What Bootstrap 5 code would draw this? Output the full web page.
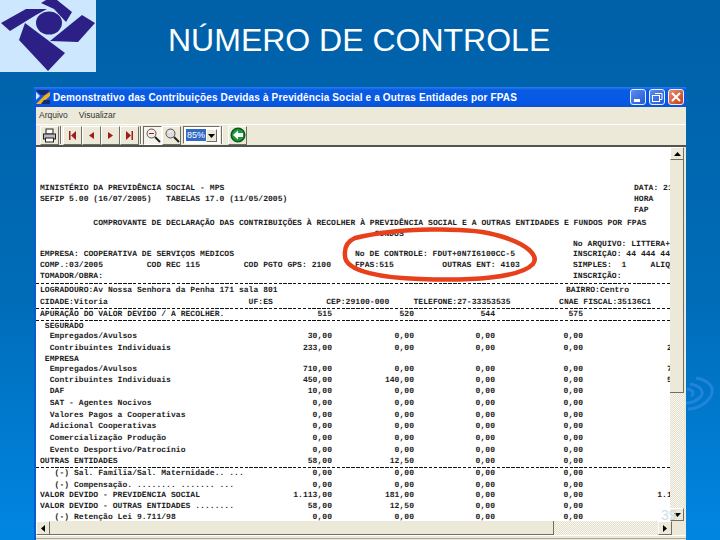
<!DOCTYPE html>
<html lang="pt-br">
<head>
  <meta charset="UTF-8" />
  <meta name="viewport" content="width=device-width, initial-scale=1.0"/>
  <title>Número de Controle</title>
  <link href="https://cdn.jsdelivr.net/npm/bootstrap@5.3.0/dist/css/bootstrap.min.css" rel="stylesheet"/>
  <style>
    :root {
      --xp-bege: #ece9d8;
      --xp-escuro: #716f64;
    }
    body {
      margin: 0;
      background-color: #0060a8;
    }
    .slide {
      position: relative;
      width: 720px;
      height: 540px;
      overflow: hidden;
      background: linear-gradient(180deg, #0060a8 0%, #006cb8 55%, #0086e2 100%);
    }
    .topo { height: 87px; flex: none; }
    .logo { flex: none; display: block; }
    .titulo {
      margin-left: 72px;
      font: 400 32px "Liberation Sans", Arial, sans-serif;
      color: #fff;
      line-height: 1;
      white-space: nowrap;
    }
    .ondas { position: absolute; left: 660px; top: 360px; }
    .janela {
      position: relative;
      width: 652px;
      margin-left: 34px;
      background: var(--xp-bege);
      border-left: 2px solid #0a5ad0;
      min-height: 0;
    }

    /* barra de titulo */
    .barra-titulo {
      height: 20px;
      margin-left: -2px;
      padding: 0 2px 0 2px;
      background: linear-gradient(180deg, #2b7cf2 0%, #0a5ce2 15%, #0558e6 70%, #0a54d4 100%);
      flex: none;
    }
    .barra-titulo .texto {
      font: 700 10px "Liberation Sans", Arial, sans-serif;
      letter-spacing: .15px;
      color: #fff;
      margin-left: 3px;
      white-space: nowrap;
    }
    .bt-janela {
      width: 16px;
      height: 16px;
      margin-left: 3px;
      border: 1px solid #e8f0ff;
      border-radius: 3px;
      background: linear-gradient(135deg, #5a8cf0, #2458d8);
      display: block;
      flex: none;
    }
    .bt-janela svg { display: block; }
    .bt-janela.fechar { background: linear-gradient(135deg, #e8906a, #c83c18); }

    /* menu e ferramentas */
    .menu-app { height: 18px; flex: none; border-bottom: 1px solid #fff; }
    .menu-app .nav-link {
      padding: 0 0 0 3px;
      margin-right: 8px;
      font: 400 8.5px/17px "Liberation Sans", Arial, sans-serif;
      color: #333;
    }
    .ferramentas {
      height: 22px;
      flex: none;
      padding-left: 4px;
      border-bottom: 2px solid #55544c;
    }
    .bt-xp {
      width: 19px;
      height: 19px;
      padding: 0;
      border: 1px solid;
      border-color: #fff var(--xp-escuro) var(--xp-escuro) #fff;
      border-radius: 0;
      background: var(--xp-bege);
      display: flex;
      align-items: center;
      justify-content: center;
      flex: none;
    }
    .bt-xp.premido {
      border-color: var(--xp-escuro) #fff #fff var(--xp-escuro);
      background: #f6f4ea;
    }
    .separa {
      width: 2px;
      height: 18px;
      margin: 0 1px;
      border-left: 1px solid var(--xp-escuro);
      border-right: 1px solid #fff;
      flex: none;
    }
    .combo {
      width: 37px;
      height: 18px;
      margin-left: 2px;
      padding: 2px;
      background: #fff;
      border: 1px solid;
      border-color: var(--xp-escuro) #fff #fff var(--xp-escuro);
      flex: none;
    }
    .combo .valor {
      background: #316ac5;
      color: #fff;
      font: 400 9px/12px "Liberation Sans", Arial, sans-serif;
      padding: 0 1px;
      white-space: nowrap;
    }
    .combo .seta {
      width: 12px;
      height: 13px;
      margin-left: auto;
      background: var(--xp-bege);
      border: 1px solid;
      border-color: #fff var(--xp-escuro) var(--xp-escuro) #fff;
    }

    /* documento */
    .corpo { height: 374px; flex: none; }
    .folha {
      width: 634px;
      flex: none;
      overflow: hidden;
      background: #fff;
      padding-top: 36px;
      font: 700 8px "Liberation Mono", "Courier New", monospace;
      letter-spacing: .05px;
      text-rendering: geometricPrecision;
      color: #1c1c1c;
    }
    .linha {
      white-space: pre;
      padding-left: 4px;
      width: 680px;
      overflow: hidden;
    }
    .lin-cab { display: grid; grid-template-columns: 315px 218px 1fr; }
    .lin-dir { display: grid; grid-template-columns: 594px 1fr; }
    .lin-bairro { display: grid; grid-template-columns: 526px 1fr; }
    .lin-valor { display: grid; grid-template-columns: 220px 72px 82px 81px 88px 113px; }
    .lin-valor > span:not(:first-child) { text-align: right; }
    .alt-10 { height: 10px; line-height: 10px; }
    .alt-11 { height: 11px; line-height: 11px; }
    .alt-12 { height: 12px; line-height: 12px; }
    .alt-13 { height: 13px; line-height: 13px; }
    .corte {
      height: 1px;
      background: repeating-linear-gradient(90deg, #111 0 3.4px, transparent 3.4px 4.85px);
    }

    /* barras de rolagem */
    .rola-v { width: 14px; flex: none; }
    .rola-seta {
      border: 1px solid;
      border-color: #fff var(--xp-escuro) var(--xp-escuro) #fff;
      background: var(--xp-bege);
      flex: none;
    }
    .rola-v .rola-seta { height: 13px; }
    .rola-v .polegar { height: 233px; }
    .hachura {
      flex: 1 1 0;
      background: repeating-conic-gradient(#faf8f0 0 25%, #e2dfcd 0 50%) 0 0 / 2px 2px;
    }
    .rola-h { height: 14px; flex: none; }
    .rola-h .rola-seta { width: 14px; }
    .rola-h .polegar { width: 504px; }
    .polegar {
      flex: none;
      background: var(--xp-bege);
      border-right: 1px solid var(--xp-escuro);
      border-bottom: 1px solid var(--xp-escuro);
    }
    .canto { width: 14px; flex: none; }
    .rodape-app { height: 5px; border-top: 1px solid #fff; flex: none; }
    .rodape-app::after {
      content: "";
      display: block;
      height: 1px;
      margin-top: 2px;
      background: #aca899;
    }

    /* sobreposicoes */
    .elipse { position: absolute; left: 338px; top: 224px; }
    .num-slide {
      position: absolute;
      left: 661px;
      top: 508px;
      font: 400 14px/14px "Liberation Sans", Arial, sans-serif;
      color: rgba(190, 215, 235, .85);
    }
  </style>
</head>
<body>
  <div class="slide d-flex flex-column">
    <svg class="ondas" width="60" height="60" viewBox="0 0 60 60" fill="none" stroke="#1f84da" stroke-width="3">
      <path d="M36 18 C52 21 58 31 46 42 C40 47 34 49 28 49"/>
      <path d="M30 24 C42 26 46 33 38 39 C34 42 30 43 26 43"/>
      <path d="M27 29 C33 30 35 33 31 36"/>
    </svg>

    <!-- Cabecalho -->
    <div class="topo d-flex align-items-start">
      <svg class="logo" width="96" height="72" viewBox="0 0 96 72">
        <rect width="96" height="72" fill="#cde8fe"/>
        <g fill="#2c1f85">
          <ellipse cx="49" cy="23" rx="13" ry="11.5"/>
          <polygon points="41,3 46,0 57,0 72,12 66,22 54,9"/>
          <polygon points="1,23 26,9 47,9 36,15 10,31"/>
          <polygon points="50,41 82,15 95,23 78,42"/>
          <polygon points="19,40 25,23 65,53 48,71"/>
        </g>
      </svg>
      <h1 class="titulo mt-4">NÚMERO DE CONTROLE</h1>
    </div>

    <!-- Janela do demonstrativo -->
    <div class="janela d-flex flex-column flex-grow-1">
      <div class="barra-titulo d-flex align-items-center">
        <svg width="14" height="14" viewBox="0 0 14 14">
          <polygon points="0,0 14,0 9,5 5,5" fill="#1a2a70"/>
          <polygon points="9,5 14,2 14,6 5,14 0,14" fill="#f0b020"/>
          <polygon points="0,2 4,6 0,10" fill="#d8e4f8"/>
          <polygon points="8,10 14,10 14,14 5,14" fill="#1a2a70"/>
        </svg>
        <span class="texto flex-grow-1">Demonstrativo das Contribuições Devidas à Previdência Social e a Outras Entidades por FPAS</span>
        <span class="bt-janela">
          <svg width="14" height="14" viewBox="0 0 14 14"><rect x="3" y="9" width="6" height="3" fill="#fff"/></svg>
        </span>
        <span class="bt-janela">
          <svg width="14" height="14" viewBox="0 0 14 14" fill="none" stroke="#fff"><rect x="2.5" y="5.5" width="7" height="6"/><path d="M5 3.5h7v6h-2"/></svg>
        </span>
        <span class="bt-janela fechar">
          <svg width="14" height="14" viewBox="0 0 14 14" stroke="#fff" stroke-width="2"><path d="M3 3l8 8M11 3l-8 8"/></svg>
        </span>
      </div>

      <ul class="menu-app nav">
        <li class="nav-item"><a class="nav-link" href="#">Arquivo</a></li>
        <li class="nav-item"><a class="nav-link" href="#">Visualizar</a></li>
      </ul>

      <div class="ferramentas d-flex align-items-center">
        <button class="bt-xp" type="button">
          <svg width="15" height="15" viewBox="0 0 15 15">
            <rect x="4" y="1" width="7" height="5" fill="#fff" stroke="#222"/>
            <rect x="1.500" y="6" width="12" height="5" fill="#bbb" stroke="#222"/>
            <rect x="3.500" y="10" width="8" height="4" fill="#fff" stroke="#222"/>
          </svg>
        </button>
        <span class="separa"></span>
        <button class="bt-xp" type="button">
          <svg width="11" height="11" viewBox="0 0 11 11" fill="#a01c1c"><rect x="2" y="1" width="1.500" height="9"/><polygon points="9,1 9,10 4,5.500"/></svg>
        </button>
        <button class="bt-xp" type="button">
          <svg width="11" height="11" viewBox="0 0 11 11" fill="#a01c1c"><polygon points="8,2 8,9 3,5.500"/></svg>
        </button>
        <button class="bt-xp" type="button">
          <svg width="11" height="11" viewBox="0 0 11 11" fill="#a01c1c"><polygon points="3,2 3,9 8,5.500"/></svg>
        </button>
        <button class="bt-xp" type="button">
          <svg width="11" height="11" viewBox="0 0 11 11" fill="#a01c1c"><polygon points="2,1 2,10 7,5.500"/><rect x="7.500" y="1" width="1.500" height="9"/></svg>
        </button>
        <span class="separa"></span>
        <button class="bt-xp premido" type="button">
          <svg width="16" height="16" viewBox="0 0 16 16" fill="none"><circle cx="6.500" cy="6.500" r="4.500" stroke="#555" fill="#eee"/><path d="M4 6.500h5" stroke="#a01c1c"/><path d="M10 10l5 5" stroke="#222" stroke-width="2"/></svg>
        </button>
        <button class="bt-xp" type="button">
          <svg width="16" height="16" viewBox="0 0 16 16" fill="none"><circle cx="6.500" cy="6.500" r="4.500" stroke="#555" fill="#ddd"/><path d="M4.500 5.500a2.500 2.500 0 0 1 3-1" stroke="#fff"/><path d="M10 10l5 5" stroke="#222" stroke-width="2"/></svg>
        </button>
        <div class="combo d-flex align-items-start">
          <div class="valor">85%</div>
          <div class="seta d-flex align-items-center justify-content-center">
            <svg width="7" height="4" viewBox="0 0 7 4"><polygon points="0,0 7,0 3.500,4" fill="#000"/></svg>
          </div>
        </div>
        <span class="separa"></span>
        <button class="bt-xp ms-1" type="button">
          <svg width="16" height="16" viewBox="0 0 16 16"><circle cx="8" cy="8" r="6.800" fill="#1f9a3c" stroke="#0a5a1a" stroke-width="1.500"/><polygon points="3,8 8,3.500 8,6 13,6 13,10 8,10 8,12.500" fill="#fff"/></svg>
        </button>
      </div>

      <div class="corpo d-flex">
        <div class="folha">
          <div class="linha lin-dir alt-11"><span>MINISTÉRIO DA PREVIDÊNCIA SOCIAL - MPS</span><span>DATA: 21</span></div>
          <div class="linha lin-dir alt-11"><span>SEFIP 5.00 (16/07/2005)   TABELAS 17.0 (11/05/2005)</span><span>HORA</span></div>
          <div class="linha lin-dir alt-12"><span></span><span>FAP</span></div>
          <div class="linha alt-13">           COMPROVANTE DE DECLARAÇÃO DAS CONTRIBUIÇÕES À RECOLHER À PREVIDÊNCIA SOCIAL E A OUTRAS ENTIDADES E FUNDOS POR FPAS</div>
          <div class="linha alt-10">                                                                     FUNDOS</div>
          <div class="linha lin-cab alt-10"><span></span><span></span><span>No ARQUIVO: LITTERA+5</span></div>
          <div class="linha lin-cab alt-10"><span>EMPRESA: COOPERATIVA DE SERVIÇOS MEDICOS</span><span>No DE CONTROLE: FDUT+0N7I6100CC-5</span><span>INSCRIÇÃO: 44 444 444</span></div>
          <div class="linha lin-cab alt-11"><span>COMP.:03/2005         COD REC 115         COD PGTO GPS: 2100</span><span>FPAS:515          OUTRAS ENT: 4103</span><span>SIMPLES:  1     ALIQ</span></div>
          <div class="linha lin-cab alt-12"><span>TOMADOR/OBRA:</span><span></span><span>INSCRIÇÃO:</span></div>
          <div class="corte"></div>
          <div class="linha lin-bairro alt-13"><span>LOGRADOURO:Av Nossa Senhora da Penha 171 sala 801</span><span>BAIRRO:Centro</span></div>
          <div class="linha alt-11">CIDADE:Vitoria                             UF:ES           CEP:29100-000     TELEFONE:27-33353535          CNAE FISCAL:35136C1</div>
          <div class="corte"></div>
          <div class="linha lin-valor alt-11"><span>APURAÇÃO DO VALOR DEVIDO / A RECOLHER.</span><span>515</span><span>520</span><span>544</span><span>575</span><span></span></div>
          <div class="corte"></div>
          <div class="linha alt-11"> SEGURADO</div>
          <div class="linha lin-valor alt-10"><span>  Empregados/Avulsos</span><span>30,00</span><span>0,00</span><span>0,00</span><span>0,00</span><span>30,00</span></div>
          <div class="linha lin-valor alt-13"><span>  Contribuintes Individuais</span><span>233,00</span><span>0,00</span><span>0,00</span><span>0,00</span><span>233,00</span></div>
          <div class="linha alt-10"> EMPRESA</div>
          <div class="linha lin-valor alt-10"><span>  Empregados/Avulsos</span><span>710,00</span><span>0,00</span><span>0,00</span><span>0,00</span><span>710,00</span></div>
          <div class="linha lin-valor alt-11"><span>  Contribuintes Individuais</span><span>450,00</span><span>140,00</span><span>0,00</span><span>0,00</span><span>590,00</span></div>
          <div class="linha lin-valor alt-12"><span>  DAF</span><span>10,00</span><span>0,00</span><span>0,00</span><span>0,00</span><span>10,00</span></div>
          <div class="linha lin-valor alt-12"><span>  SAT - Agentes Nocivos</span><span>0,00</span><span>0,00</span><span>0,00</span><span>0,00</span><span>0,00</span></div>
          <div class="linha lin-valor alt-11"><span>  Valores Pagos a Cooperativas</span><span>0,00</span><span>0,00</span><span>0,00</span><span>0,00</span><span>0,00</span></div>
          <div class="linha lin-valor alt-12"><span>  Adicional Cooperativas</span><span>0,00</span><span>0,00</span><span>0,00</span><span>0,00</span><span>0,00</span></div>
          <div class="linha lin-valor alt-12"><span>  Comercialização Produção</span><span>0,00</span><span>0,00</span><span>0,00</span><span>0,00</span><span>0,00</span></div>
          <div class="linha lin-valor alt-11"><span>  Evento Desportivo/Patrocínio</span><span>0,00</span><span>0,00</span><span>0,00</span><span>0,00</span><span>0,00</span></div>
          <div class="linha lin-valor alt-11"><span>OUTRAS ENTIDADES</span><span>58,00</span><span>12,50</span><span>0,00</span><span>0,00</span><span>70,50</span></div>
          <div class="corte"></div>
          <div class="linha lin-valor alt-12"><span>   (-) Sal. Família/Sal. Maternidade.. ...</span><span>0,00</span><span>0,00</span><span>0,00</span><span>0,00</span><span>0,00</span></div>
          <div class="linha lin-valor alt-11"><span>   (-) Compensação. ........ ....... ...</span><span>0,00</span><span>0,00</span><span>0,00</span><span>0,00</span><span>0,00</span></div>
          <div class="linha lin-valor alt-10"><span>VALOR DEVIDO - PREVIDÊNCIA SOCIAL</span><span>1.113,00</span><span>181,00</span><span>0,00</span><span>0,00</span><span>1.113,00</span></div>
          <div class="linha lin-valor alt-11"><span>VALOR DEVIDO - OUTRAS ENTIDADES ........</span><span>58,00</span><span>12,50</span><span>0,00</span><span>0,00</span><span>70,50</span></div>
          <div class="linha lin-valor alt-11"><span>   (-) Retenção Lei 9.711/98</span><span>0,00</span><span>0,00</span><span>0,00</span><span>0,00</span><span>0,00</span></div>
        </div>
        <div class="rola-v d-flex flex-column">
          <div class="rola-seta d-flex align-items-center justify-content-center">
            <svg width="7" height="4" viewBox="0 0 7 4"><polygon points="0,4 7,4 3.500,0" fill="#000"/></svg>
          </div>
          <div class="polegar"></div>
          <div class="hachura"></div>
          <div class="rola-seta d-flex align-items-center justify-content-center">
            <svg width="7" height="4" viewBox="0 0 7 4"><polygon points="0,0 7,0 3.500,4" fill="#000"/></svg>
          </div>
        </div>
      </div>

      <div class="rola-h d-flex">
        <div class="rola-seta d-flex align-items-center justify-content-center">
          <svg width="4" height="7" viewBox="0 0 4 7"><polygon points="4,0 4,7 0,3.500" fill="#000"/></svg>
        </div>
        <div class="polegar"></div>
        <div class="hachura"></div>
        <div class="rola-seta d-flex align-items-center justify-content-center">
          <svg width="4" height="7" viewBox="0 0 4 7"><polygon points="0,0 0,7 4,3.500" fill="#000"/></svg>
        </div>
        <div class="canto"></div>
      </div>
      <div class="rodape-app"></div>
    </div>

    <svg class="elipse" width="204" height="60" viewBox="338 224 204 60" fill="none">
      <path d="M355 238 C395 228 470 226 500 236 C528 244 539 256 533 264 C520 278 470 281 420 279 C385 278 345 272 345 256 C344 247 348 241 355 238Z" stroke="#e8401a" stroke-width="4.500"/>
    </svg>
    <span class="num-slide">39</span>
  </div>

  <script src="https://cdn.jsdelivr.net/npm/bootstrap@5.3.0/dist/js/bootstrap.bundle.min.js"></script>
</body>
</html>
